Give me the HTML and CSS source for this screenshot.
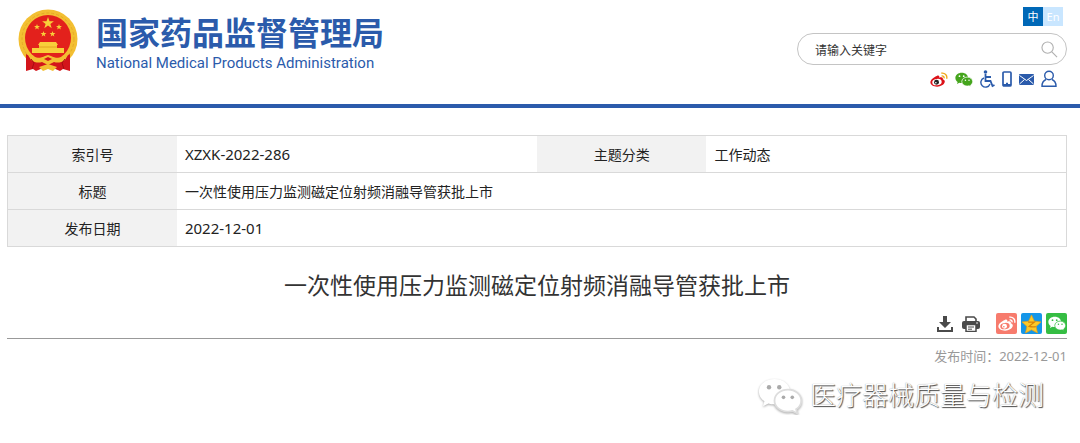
FILE: index.html
```html
<!DOCTYPE html>
<html lang="zh-CN">

<head>
    <meta charset="UTF-8">
    <meta name="viewport" content="width=device-width, initial-scale=1.0">
    <title>国家药品监督管理局</title>

    <link rel="stylesheet" href="styles.css">
</head>

<body>

    <!-- shared icons -->
    <svg class="sprite" aria-hidden="true">
        <symbol id="wechat" viewBox="0 0 24 20">
            <path d="M9 1C4.200 1 .5 4 .5 7.900c0 2.200 1.200 4 3 5.300l-.8 2.700 3-1.600c1 .3 2 .5 3.200.5C13.700 14.800 17.500 11.800 17.500 7.900S13.700 1 9 1z" />
            <path class="bubble" d="M16.300 6.800c-4.100 0-7.300 2.700-7.300 6s3.200 6 7.300 6c.9 0 1.700-.1 2.500-.4l2.700 1.400-.7-2.300c1.700-1.100 2.800-2.800 2.800-4.700 0-3.300-3.200-6-7.300-6z" />
            <g class="eyes">
                <circle cx="6" cy="5.500" r="1.200" />
                <circle cx="11.600" cy="5.500" r="1.200" />
                <circle cx="13.900" cy="11" r="1" />
                <circle cx="18.700" cy="11" r="1" />
            </g>
        </symbol>
        <symbol id="weibo" viewBox="0 0 24 20">
            <path d="M9 5.200C11.500 4.200 13 5 12.300 7.600c3-1.200 5.700-.6 4.700 2.200 2.200.7 3.200 2 2.600 4C18.700 17 14.300 19.500 9.500 19.500S.5 17.300.5 13.700C.5 10.500 4.800 6.700 9 5.200z" />
            <ellipse class="face" cx="9.300" cy="13.400" rx="6.300" ry="4.200" transform="rotate(-8 9.300 13.400)" />
            <circle class="pupil" cx="8.700" cy="13.700" r="3.300" />
            <circle class="face" cx="7.800" cy="14.300" r="1.100" />
            <path class="waves" d="M15.500 5.300c2-.4 3.700 1.200 3.200 3.200M15 1.600c4.800-1 8.500 2.900 7.200 7.400" />
        </symbol>
    </svg>

    <header>
        <a class="logo" href="#">
            <svg class="emblem" viewBox="0 0 60 64" aria-hidden="true">
                <circle cx="30" cy="30" r="29.500" fill="#f3bf32" />
                <circle cx="30" cy="30" r="26" fill="none" stroke="#e5ab26" stroke-width="1" stroke-dasharray="3 2" />
                <path d="M8 45L8 62l7-2 3 2 7-3h10l7 3 3-2 7 2V45l-10 6H18z" fill="#d3141b" />
                <circle cx="30" cy="29" r="23" fill="#e3211c" />
                <g fill="#f8cf3a">
                    <path id="star" d="M30 8l1.500 4.200h4.400l-3.500 2.700 1.300 4.300-3.700-2.600-3.700 2.600 1.300-4.300-3.500-2.700h4.400z" />
                    <use href="#star" transform="translate(4 11) scale(.5)" />
                    <use href="#star" transform="translate(26 11) scale(.5)" />
                    <use href="#star" transform="translate(10.500 18) scale(.5)" />
                    <use href="#star" transform="translate(19.500 18) scale(.5)" />
                    <path d="M22 33h16l2 3h-1v3h7v5H14v-5h7v-3h-1z" />
                </g>
                <path d="M21 38h18" stroke="#dd9b1b" stroke-width=".8" />
                <path d="M10 46c6 3 12 4 17 1l3-1 3 1c5 3 11 2 17-1l-3 5c-4 3-8 3-11 2l-6 3-6-3c-3 1-7 1-11-2z" fill="#f3bf32" />
                <path d="M26 50l4-2 4 2-4 2z" fill="#d3141b" />
                <path d="M21 58l9-3 9 3-4 4-5-2-5 2z" fill="#f3bf32" />
                <path d="M13 50l3 4-2 6M47 50l-3 4 2 6" fill="none" stroke="#a60c12" />
            </svg>
            <span class="names">
                <strong>国家药品监督管理局</strong>
                <span>National Medical Products Administration</span>
            </span>
        </a>

        <div class="tools">
            <nav class="lang">
                <a class="active" href="#">中</a>
                <a href="#">En</a>
            </nav>
            <form class="search">
                <input type="text" placeholder="请输入关键字" aria-label="请输入关键字">
                <button type="submit" aria-label="搜索">
                    <svg viewBox="0 0 18 18"><circle cx="7" cy="7" r="6" /><path d="M11.500 11.500l5.500 5.500" /></svg>
                </button>
            </form>
            <nav class="links">
                <a href="#" aria-label="微博"><svg class="weibo-color" width="18" height="15"><use href="#weibo" /></svg></a>
                <a href="#" aria-label="微信"><svg class="wechat-green" width="18" height="15"><use href="#wechat" /></svg></a>
                <a href="#" aria-label="无障碍">
                    <svg class="line" width="15" height="18" viewBox="0 0 15 18">
                        <circle cx="5.500" cy="2" r="1.800" class="solid" />
                        <path d="M5.500 4v7h5l2 5 2-1M6 7h5" stroke-width="1.800" />
                        <path d="M4 8a4.700 4.700 0 1 0 6 6" />
                    </svg>
                </a>
                <a href="#" aria-label="手机">
                    <svg class="line" width="10" height="16" viewBox="0 0 10 16">
                        <rect x="1" y="1" width="8" height="14" rx="1" stroke-width="1.700" />
                        <path d="M1 14h8" stroke-width="2" /><path d="M4 12.500h2" />
                    </svg>
                </a>
                <a href="#" aria-label="邮箱">
                    <svg width="15" height="11" viewBox="0 0 15 11">
                        <rect width="15" height="11" rx="1" fill="#2b5bab" />
                        <path d="M.5 1.500l7 5 7-5M.5 10l5-4.500M14.500 10l-5-4.500" fill="none" stroke="#fff" />
                    </svg>
                </a>
                <a href="#" aria-label="用户">
                    <svg class="line" width="16" height="18" viewBox="0 0 16 18">
                        <circle cx="8" cy="5.500" r="4.300" />
                        <path d="M5 9.500C2.500 10.500 1 13 1 16.200h14c0-3.200-1.500-5.700-4-6.700" />
                    </svg>
                </a>
            </nav>
        </div>
    </header>

    <main>
        <table>
            <tr>
                <th>索引号</th>
                <td class="latin">XZXK-2022-286</td>
                <th>主题分类</th>
                <td>工作动态</td>
            </tr>
            <tr>
                <th>标题</th>
                <td colspan="3">一次性使用压力监测磁定位射频消融导管获批上市</td>
            </tr>
            <tr>
                <th>发布日期</th>
                <td class="latin" colspan="3">2022-12-01</td>
            </tr>
        </table>

        <h1>一次性使用压力监测磁定位射频消融导管获批上市</h1>

        <div class="share">
            <button type="button" aria-label="下载">
                <svg width="16" height="16" viewBox="0 0 16 16" fill="#4a4a4a">
                    <path d="M6 0h4v6h4l-6 6-6-6h4zM0 11h2v3h12v-3h2v5H0z" />
                </svg>
            </button>
            <button class="print" type="button" aria-label="打印">
                <svg width="18" height="16" viewBox="0 0 18 16">
                    <path d="M4 5V1h8l2 2v2" fill="#fff" stroke="#4a4a4a" stroke-width="1.600" />
                    <rect y="5" width="18" height="8" rx="2" fill="#4a4a4a" />
                    <rect x="4" y="8.500" width="10" height="7" fill="#fff" stroke="#4a4a4a" stroke-width="1.500" />
                    <path d="M6 11h6M6 13.200h4" stroke="#4a4a4a" />
                    <circle cx="15" cy="7" r=".8" fill="#fff" />
                </svg>
            </button>
            <a class="tile red" href="#" aria-label="分享到微博"><svg width="18" height="15"><use href="#weibo" /></svg></a>
            <a class="tile blue" href="#" aria-label="分享到QQ空间">
                <svg width="21" height="20" viewBox="0 0 22 21">
                    <path d="M11 1l3 6.500 7 .8-5.200 4.700 1.500 7L11 16.600 4.700 20l1.500-7L1 8.300l7-.8z" fill="#fdc928" stroke="#e9a014" stroke-width=".7" />
                    <path d="M7.500 8.500h6.500L8.500 13c3 .8 4.500.7 7 .2" fill="none" stroke="#d78108" stroke-width="1.300" />
                </svg>
            </a>
            <a class="tile green" href="#" aria-label="分享到微信"><svg width="18" height="15"><use href="#wechat" /></svg></a>
        </div>

        <p class="date">发布时间：2022-12-01</p>

        <div class="account">
            <svg width="44" height="37"><use href="#wechat" /></svg>
            <span>医疗器械质量与检测</span>
        </div>
    </main>

</body>

</html>
```

FILE: styles.css
```css
* {
    box-sizing: border-box;
    margin: 0;
    padding: 0;
}

body {
    background-color: white;
    color: #222;
    font-family: "Noto Sans", "Noto Sans CJK SC", sans-serif;
    font-size: 14px;
}

a {
    color: inherit;
    text-decoration: none;
}

button {
    border: 0;
    background: none;
    cursor: pointer;
}

svg {
    display: block;
}

.sprite {
    display: none;
}

header {
    display: flex;
    justify-content: space-between;
    padding: 7px 13px 16px 18px;
    border-bottom: 4px solid #2b5bab;
}

.logo {
    display: flex;
    align-items: flex-start;
    gap: 18px;
    color: #2b5bab;
}

.emblem {
    width: 60px;
    height: 64px;
    margin-top: 2px;
}

.names {
    display: flex;
    flex-direction: column;
    padding-top: 4px;
    font: 15px/24px Roboto, sans-serif;
    white-space: nowrap;
}

.names strong {
    font: bold 32px/40px "Noto Sans CJK SC", sans-serif;
}

.tools {
    display: flex;
    flex-direction: column;
    align-items: flex-end;
    width: 270px;
}

.lang {
    display: flex;
    margin-right: 4px;
    font-size: 11px;
    line-height: 19px;
    text-align: center;
}

.lang a {
    width: 20px;
    background-color: #c9e6ff;
    color: white;
}

.lang .active {
    background-color: #0068b7;
}

.search {
    display: flex;
    align-items: center;
    width: 100%;
    height: 32px;
    margin-top: 7px;
    padding: 0 8px 0 17px;
    border: 1px solid #c4c4c4;
    border-radius: 16px;
}

.search input {
    flex: 1;
    min-width: 0;
    border: 0;
    outline: 0;
    background: none;
    color: #333;
    font: 12px "Noto Sans CJK SC", sans-serif;
}

.search input::placeholder {
    color: #333;
}

.search svg {
    width: 17px;
    height: 17px;
    fill: none;
    stroke: #b0b0b0;
    stroke-width: 1.2;
}

.links {
    display: flex;
    align-items: center;
    gap: 7px;
    height: 18px;
    margin: 5px 10px 0 0;
}

.line {
    fill: none;
    stroke: #2b5bab;
    stroke-width: 1.4;
}

.solid {
    fill: #2b5bab;
    stroke: none;
}

/* the two-tone icons take their inner colours from the svg around them */
.eyes,
.face {
    fill: var(--inner, white);
}

.bubble {
    stroke: var(--gap, white);
    stroke-width: 1;
}

.pupil {
    fill: var(--pupil, #222);
}

.waves {
    fill: none;
    stroke: var(--waves, white);
    stroke-width: 1.8;
}

.weibo-color {
    --waves: #f0a818;
    fill: #dc1118;
}

.wechat-green {
    fill: #45a51d;
}

main {
    padding: 27px 13px 0 7px;
}

table {
    width: 100%;
    table-layout: fixed;
    border: 1px solid #d9d9d9;
    border-collapse: collapse;
}

tr {
    height: 37px;
    border-bottom: 1px solid #d9d9d9;
}

th {
    width: 16%;
    background-color: #f2f2f2;
    font-weight: normal;
}

td {
    padding-left: 8px;
}

.latin {
    font-size: 15px;
}

h1 {
    margin-top: 21px;
    color: #333;
    font-size: 23px;
    font-weight: normal;
    line-height: 34px;
    text-align: center;
}

.share {
    display: flex;
    justify-content: flex-end;
    align-items: center;
    gap: 4px;
    margin-top: 11px;
    padding-bottom: 4px;
    border-bottom: 1px solid #999;
}

.print {
    margin: 0 12px 0 5px;
}

.tile {
    display: grid;
    place-items: center;
    width: 21px;
    height: 21px;
    border-radius: 2px;
    fill: white;
}

.red {
    --inner: #f77b6d;
    --pupil: white;
    background-color: #f77b6d;
}

.blue {
    background-color: #1596e8;
}

.green {
    --inner: #35bd43;
    --gap: #35bd43;
    background-color: #35bd43;
}

.date {
    margin-top: 8px;
    color: #999;
    font-size: 13px;
    line-height: 18px;
    text-align: right;
}

.account {
    display: flex;
    justify-content: flex-end;
    align-items: center;
    gap: 8px;
    margin: 10px 23px 0 0;
    color: white;
    font-size: 26px;
    font-weight: 300;
    line-height: 40px;
    text-shadow: 1px 1px 1px #444, 0 0 1px #999;
}

.account svg {
    --inner: #aaa;
    --gap: #ddd;
    fill: white;
    filter: drop-shadow(0 1px 1px #aaa);
}
```
